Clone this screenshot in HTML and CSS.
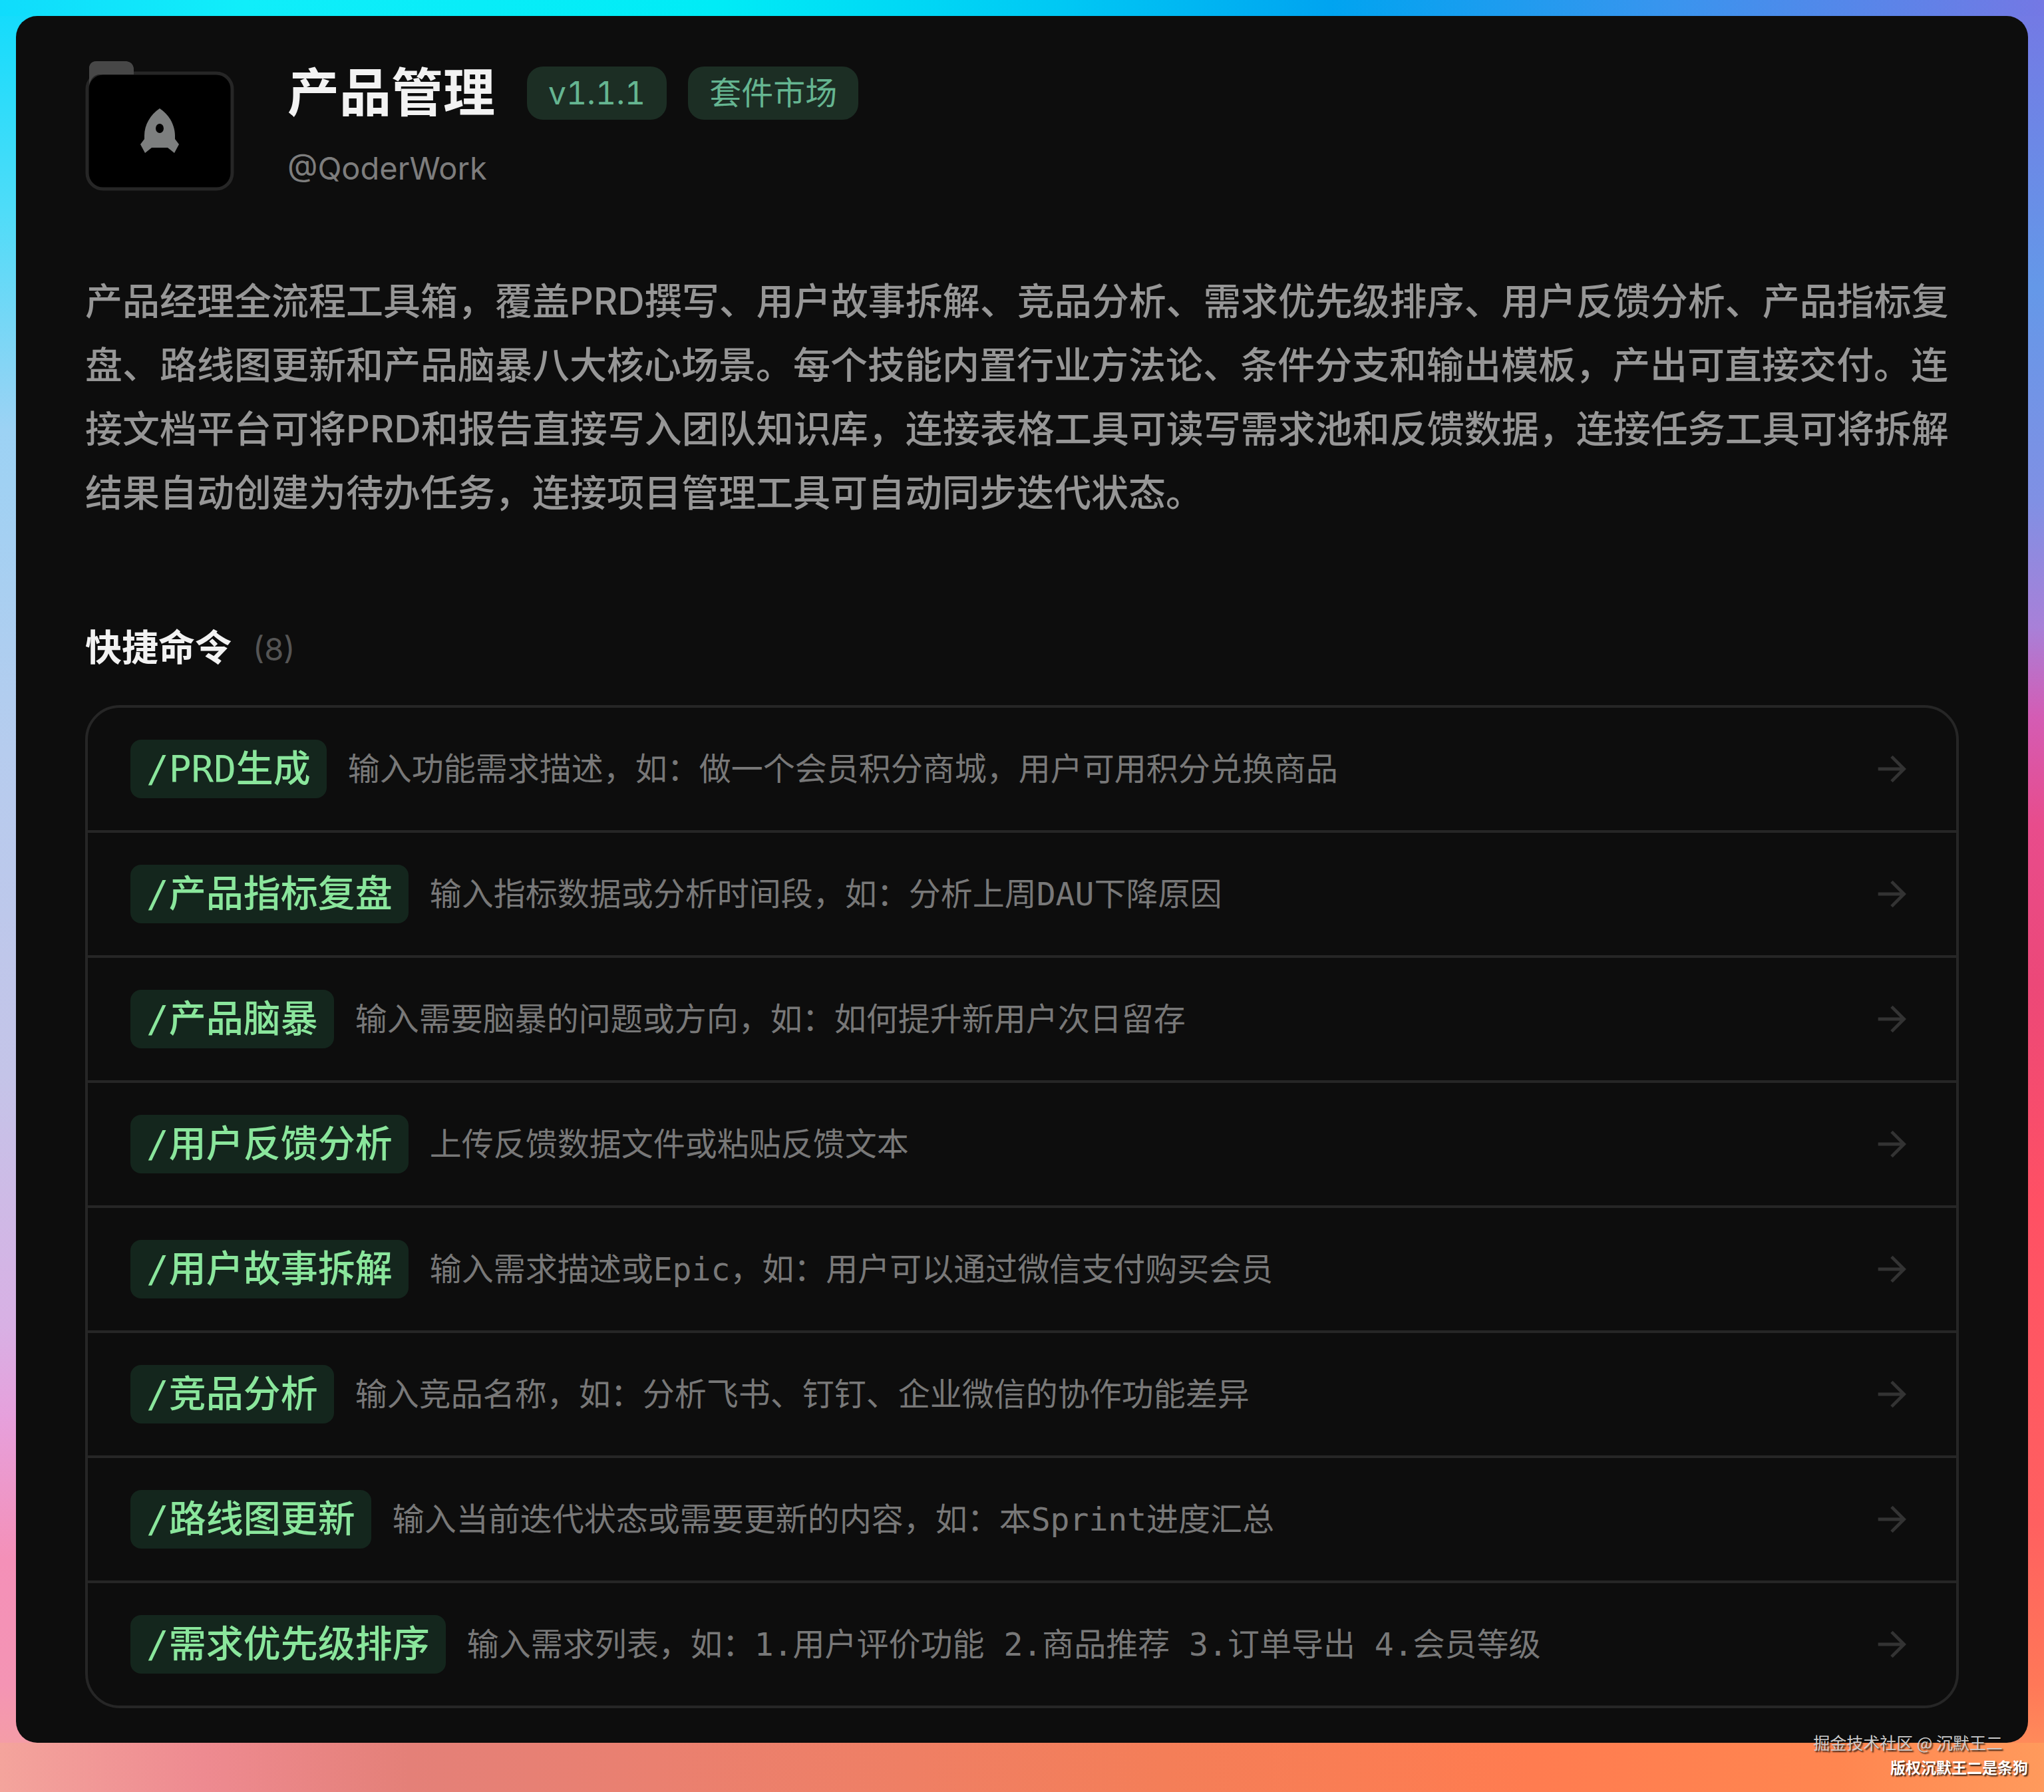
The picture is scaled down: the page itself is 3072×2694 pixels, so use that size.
FILE: index.html
```html
<!DOCTYPE html>
<html lang="zh-CN">
<head>
<meta charset="UTF-8" />
<meta name="viewport" content="width=device-width, initial-scale=1" />
<title>产品管理</title>
<link rel="stylesheet" href="styles.css">
</head>
<body>

<!-- shared arrow icon -->
<svg class="sprite" width="0" height="0" aria-hidden="true">
  <symbol id="arrow" viewBox="0 0 24 24">
    <path d="M4 12H18.5M11.6 5L18.6 12L11.6 19" fill="none" stroke="currentColor" stroke-width="1.8" />
  </symbol>
</svg>

<main class="panel">
  <header class="suite">
    <svg class="suite-icon" viewBox="0 0 224 196" aria-hidden="true">
      <path d="M6 40V12Q6 0 18 0H59Q73 0 73 14V24H40Z" fill="#474747" />
      <rect x="3" y="18" width="218" height="174" rx="24" fill="#000" stroke="#262626" stroke-width="5" />
      <path d="M6 40V12Q6 0 18 0H59Q73 0 73 14V20H20Q9 22 6 36Z" fill="#474747" />
      <path fill-rule="evenodd" fill="#7d7f7f" d="M112 71C126 80 135 96 135 112V117L141 125L134 138L124 130H100L90 138L83 125L89 117V112C89 96 98 80 112 71ZM112 94A6 7 0 1 0 112 108A6 7 0 1 0 112 94Z" />
    </svg>
    <div class="suite-info">
      <div class="suite-title">
        <h1>产品管理</h1>
        <span class="badge">v1.1.1</span>
        <span class="badge">套件市场</span>
      </div>
      <p class="author">@QoderWork</p>
    </div>
  </header>

  <p class="description">产品经理全流程工具箱，覆盖PRD撰写、用户故事拆解、竞品分析、需求优先级排序、用户反馈分析、产品指标复盘、路线图更新和产品脑暴八大核心场景。每个技能内置行业方法论、条件分支和输出模板，产出可直接交付。连接文档平台可将PRD和报告直接写入团队知识库，连接表格工具可读写需求池和反馈数据，连接任务工具可将拆解结果自动创建为待办任务，连接项目管理工具可自动同步迭代状态。</p>

  <h2 class="section-title">快捷命令 <span class="count">(8)</span></h2>

  <ul class="commands">
    <li><a class="command" href="#">
      <span class="name">/PRD生成</span>
      <span class="hint">输入功能需求描述，如：做一个会员积分商城，用户可用积分兑换商品</span>
      <svg class="arrow" aria-hidden="true"><use href="#arrow" /></svg>
    </a></li>
    <li><a class="command" href="#">
      <span class="name">/产品指标复盘</span>
      <span class="hint">输入指标数据或分析时间段，如：分析上周DAU下降原因</span>
      <svg class="arrow" aria-hidden="true"><use href="#arrow" /></svg>
    </a></li>
    <li><a class="command" href="#">
      <span class="name">/产品脑暴</span>
      <span class="hint">输入需要脑暴的问题或方向，如：如何提升新用户次日留存</span>
      <svg class="arrow" aria-hidden="true"><use href="#arrow" /></svg>
    </a></li>
    <li><a class="command" href="#">
      <span class="name">/用户反馈分析</span>
      <span class="hint">上传反馈数据文件或粘贴反馈文本</span>
      <svg class="arrow" aria-hidden="true"><use href="#arrow" /></svg>
    </a></li>
    <li><a class="command" href="#">
      <span class="name">/用户故事拆解</span>
      <span class="hint">输入需求描述或Epic，如：用户可以通过微信支付购买会员</span>
      <svg class="arrow" aria-hidden="true"><use href="#arrow" /></svg>
    </a></li>
    <li><a class="command" href="#">
      <span class="name">/竞品分析</span>
      <span class="hint">输入竞品名称，如：分析飞书、钉钉、企业微信的协作功能差异</span>
      <svg class="arrow" aria-hidden="true"><use href="#arrow" /></svg>
    </a></li>
    <li><a class="command" href="#">
      <span class="name">/路线图更新</span>
      <span class="hint">输入当前迭代状态或需要更新的内容，如：本Sprint进度汇总</span>
      <svg class="arrow" aria-hidden="true"><use href="#arrow" /></svg>
    </a></li>
    <li><a class="command" href="#">
      <span class="name">/需求优先级排序</span>
      <span class="hint">输入需求列表，如：1.用户评价功能 2.商品推荐 3.订单导出 4.会员等级</span>
      <svg class="arrow" aria-hidden="true"><use href="#arrow" /></svg>
    </a></li>
  </ul>
</main>

<footer class="watermark">
  <p class="community">掘金技术社区 @ 沉默王二</p>
  <p class="owner">版权沉默王二是条狗</p>
</footer>

</body>
</html>
```
FILE: styles.css
```css
:root {
  --panel: #0d0d0d;
  --line: #262626;
  --sans: Inter, "Noto Sans CJK SC", sans-serif;
  --mono: "DejaVu Sans Mono", "Noto Sans CJK SC", monospace;
}
* {
  box-sizing: border-box;
  margin: 0;
  padding: 0;
}
body {
  position: relative;
  min-height: 100vh;
  padding: 24px 24px 74px;
  font-family: var(--sans);
  font-weight: 500;
  color: #f2f2f2;
  /* top and bottom strips first, then the two sides */
  background:
    linear-gradient(to right, #10dcfc, #10eefa 12%, #00ecf6 35%, #00c8f4 52%, #00a4f0 65%, #3a94ee 82%, #7478e4) top / 100% 24px no-repeat,
    linear-gradient(to right, #f4a49c, #ee8a90 10%, #e48078 20%, #ea8070 32%, #f47e58 57%, #ff7c50 75%, #ff8650 90%, #ff9a5c) bottom / 100% 74px no-repeat,
    linear-gradient(#10dcfc, #50dcf8 12%, #9cd2f4 24%, #b6ccee 42%, #c4c4e8 60%, #d8b0e4 74%, #e6a0dc 79%, #f490b8 87%, #f494b4 94%, #f4a49c) left / 50% 100% no-repeat,
    linear-gradient(#7478e4, #6498e8 16%, #8090e4 28%, #a880d8 35%, #d45cb4 40%, #e84c8c 46%, #ec4878 55%, #ff5064 67%, #ff6060 85%, #ff7858 94%, #ff9a5c) right / 50% 100% no-repeat;
}
.sprite {
  position: absolute;
}
.panel {
  padding: 68px 104px 52px;
  border-radius: 32px;
  background-color: var(--panel);
}

/* Header */
.suite {
  display: flex;
  gap: 80px;
}
.suite-icon {
  width: 224px;
  height: 196px;
}
.suite-info {
  padding-top: 8px;
}
.suite-title {
  display: flex;
  align-items: center;
  gap: 32px;
}
.suite-title h1 {
  margin-right: 16px;
  font-size: 78px;
  line-height: 80px;
  font-weight: 700;
}
.badge {
  padding: 0 32px;
  border-radius: 24px;
  font-size: 48px;
  line-height: 80px;
  font-weight: 400;
  font-variant-numeric: tabular-nums;
  color: #65b591;
  background-color: #1c2e24;
}
.author {
  margin-top: 42px;
  font-size: 47px;
  line-height: 62px;
  font-weight: 400;
  color: #7d7d7d;
}
.description {
  margin-top: 117px;
  font-size: 56px;
  line-height: 96px;
  color: #969696;
}

/* Commands */
.section-title {
  display: flex;
  align-items: baseline;
  gap: 32px;
  margin-top: 144px;
  font-size: 55px;
  line-height: 80px;
  font-weight: 700;
}
.count {
  font-size: 47px;
  font-weight: 400;
  color: #555;
}
.commands {
  margin-top: 44px;
  border: 4px solid var(--line);
  border-radius: 52px;
  list-style: none;
}
.commands li + li {
  border-top: 4px solid var(--line);
}
.command {
  display: flex;
  align-items: center;
  gap: 32px;
  padding: 48px 64px;
  font-family: var(--mono);
  text-decoration: none;
}
.name {
  padding: 0 24px;
  border-radius: 16px;
  font-size: 56px;
  line-height: 88px;
  color: #8ae69c;
  background-color: #14261d;
}
.hint {
  flex: 1;
  font-size: 48px;
  line-height: 64px;
  font-weight: 400;
  color: #787878;
}
.arrow {
  width: 64px;
  height: 64px;
  color: #333;
}

/* Watermark sits over the panel's bottom corner */
.watermark {
  position: absolute;
  right: 24px;
  bottom: 20px;
  font-family: "Noto Sans CJK SC", sans-serif;
  text-align: right;
  text-shadow: 2px 2px 2px rgba(0,0,0,0.8);
}
.community {
  padding-right: 38px;
  font-size: 25px;
  line-height: 38px;
  font-weight: 400;
  color: #ccc;
}
.owner {
  font-size: 23px;
  line-height: 36px;
  font-weight: 700;
  color: #fff;
}
```
